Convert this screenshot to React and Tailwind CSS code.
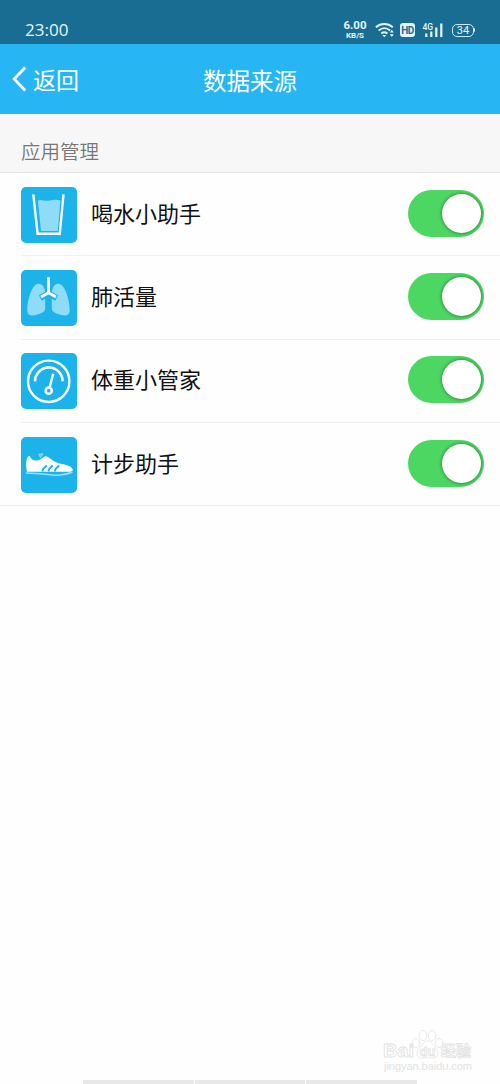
import React from "react";

const GlassIcon = () => (
  <svg viewBox="0 0 56 56" className="h-full w-full" fill="none">
    <path d="M16.8 13.6c3-1.6 6 .7 11 .2 5-.9 8-1.5 11.6-.2L36.8 44H20z" fill="#8edcf8" />
    <path d="M12.3 7.3l4.3 39.4h22.2l3.7-39.4" stroke="#fff" strokeWidth="2.4" />
  </svg>
);

const LungsIcon = () => (
  <svg viewBox="0 0 56 56" className="h-full w-full" fill="none">
    <path d="M17.5 13.8c4.5 0 6.7 4.5 6.7 10V38c0 4-3.5 5.4-7.7 6.5-5.5 1.5-10.2 2-10.2-4.5 0-11 5.2-26.2 11.2-26.2z" fill="#8edcf8" />
    <path d="M37.5 13.8c-4.5 0-6.7 4.5-6.7 10V38c0 4 3.5 5.4 7.7 6.5 5.5 1.5 10.2 2 10.2-4.5 0-11-5.2-26.2-11.2-26.2z" fill="#8edcf8" />
    <path d="M27.5 8v15.5L19.3 28M27.5 23.5l8.2 4.5" stroke="#1bb3ea" strokeWidth="6" />
    <path d="M27.5 7.3v15.5L20 27M27.5 22.8L35 27" stroke="#fff" strokeWidth="3" strokeLinejoin="round" />
  </svg>
);

const GaugeIcon = () => (
  <svg viewBox="0 0 56 56" className="h-full w-full" fill="none" stroke="#fff">
    <circle cx="27.7" cy="28.3" r="20.7" strokeWidth="2.4" />
    <path d="M14 28.3a13.8 13.8 0 0 1 27.6 0" strokeWidth="2.6" />
    <path d="M32.2 20.7L28.5 35" strokeWidth="2.4" />
    <circle cx="27.7" cy="37.7" r="3.1" strokeWidth="2.5" />
  </svg>
);

const ShoeIcon = () => (
  <svg viewBox="0 0 56 56" className="h-full w-full" fill="none">
    <path d="M8 19c1.4-.2 1.5 2 3 3.2 2.7 2.2 7 1.6 9.3-.4l3.4-2.4c1.7-.6 3.3.6 5.1 1.9 4.3 3.2 7 4.9 12 5.8 5 .9 9.6 2.4 10.9 5.2.4 1.6-1 2.5-3.3 2.5H6c-1-4.3-1.2-9.5-.2-12.8.4-1.5 1.2-2.7 2.2-3z" fill="#fff" />
    <path d="M5 36c8 .8 15 .4 22 1.6 7 1.2 17.5.7 24.5-2.6" stroke="#9de1f9" strokeWidth="1.5" />
    <path d="M21.3 34.3l1-2.6 3.5-3.2M27.3 34.3l1-2.6 3.5-3.2M33.7 34.3l1-2.6 3.5-3.2" stroke="#1bb3ea" strokeWidth="1.9" />
    <path d="M17.8 17.3l4.2-.5-2.5 3.7z" fill="#5fcdf3" stroke="#9de1f9" strokeWidth="0.9" />
  </svg>
);

const apps = [
  { name: "喝水小助手", Icon: GlassIcon },
  { name: "肺活量", Icon: LungsIcon },
  { name: "体重小管家", Icon: GaugeIcon },
  { name: "计步助手", Icon: ShoeIcon },
];

const StatusBar = () => (
  <div className="flex h-11 items-end justify-between bg-[#1a6d92] px-[25px] text-[#e3f5fc]">
    <span className="pb-[5px] font-['Open_Sans',sans-serif] text-[17px] leading-[18px]">23:00</span>
    <div className="flex h-[27px] items-center pb-px">
      <div className="-ml-px flex w-6 flex-col items-center font-['Roboto',sans-serif] font-bold">
        <span className="text-[11.5px] leading-[11px]">6.00</span>
        <span className="text-[8px] leading-[9px]">KB/S</span>
      </div>
      <svg viewBox="0 0 20 16" className="ml-2 h-4 w-5" fill="none" stroke="currentColor" strokeWidth="1.8">
        <path d="M.8 5.2c5-4.3 12-4.3 17 0M3.6 8.5c3.5-2.9 8-2.900 11.500 0M6.300 11.500c2-1.600 4.100-1.600 6.100 0" />
        <path d="M7.3 13l2 2.300 2-2.300zM14.800 10.400l2-2.600 2 2.600zM14.800 12.300l2 2.600 2-2.600z" fill="currentColor" stroke="none" />
      </svg>
      <span className="ml-[5px] flex h-[14px] w-[15px] items-center justify-center rounded-[3px] bg-[#e3f5fc] font-['Roboto',sans-serif] text-[10px] font-bold tracking-tighter text-[#1a6d92]">
        HD
      </span>
      <svg viewBox="0 0 22 16" className="ml-[7px] h-4 w-[22px]" fill="currentColor">
        <text x="0.5" y="7.5" fontSize="8.5" fontFamily="Roboto, sans-serif" fontWeight="500">4G</text>
        <path d="M3.2 11.5h2.2V15H3.200zM8.200 9.500h2.200V15H8.200zM13.200 5.500h2.200V15h-2.200zM18.200 1.500h2.200V15h-2.200z" />
      </svg>
      <span className="ml-2 flex h-[13px] w-[22px] items-center justify-center rounded-[5px] border-[1.5px] border-[#c9eaf6] font-['Roboto',sans-serif] text-[11px] leading-none">
        34
      </span>
      <span className="h-1 w-px rounded-r bg-[#c9eaf6]" />
    </div>
  </div>
);

const Header = () => (
  <header className="grid h-[70px] grid-cols-3 items-center bg-[#27b6f3] text-white">
    <div className="flex items-center pl-3">
      <svg viewBox="0 0 15 26" className="h-[26px] w-[15px]" fill="none" stroke="currentColor" strokeWidth="2.8">
        <path d="M13.2 1.5L2.2 13l11 11.5" />
      </svg>
      <span className="ml-[6px] text-[23px] leading-8">返回</span>
    </div>
    <h1 className="pt-[2px] text-center text-[23.5px] leading-8">数据来源</h1>
  </header>
);

const Toggle = () => (
  <div className="mb-[3px] flex h-[47px] w-[76px] items-center justify-end rounded-full bg-[#4cd662] pr-[3px]">
    <span className="h-[39px] w-[39px] rounded-full bg-white shadow-[0_0_3px_1px_rgba(0,0,0,0.3)]" />
  </div>
);

const AppRow = ({ name, Icon }) => (
  <li className="flex h-[83.3px] items-center pr-4 pl-[21px]">
    <div className="h-[56px] w-[56px] overflow-hidden rounded-[5px] bg-[#1bb3ea]">
      <Icon />
    </div>
    <span className="mb-[6px] ml-[14px] flex-1 text-[22px] leading-8 text-[#111]">{name}</span>
    <Toggle />
  </li>
);

const Watermark = () => (
  <div className="absolute top-[1028px] left-[383px] w-[92px] text-[#e2e2e2]">
    <svg viewBox="0 0 92 46" className="h-[46px] w-[92px]" fill="#fff" stroke="currentColor" strokeWidth="0.8">
      <ellipse cx="40" cy="7.5" rx="3.8" ry="5" />
      <ellipse cx="49" cy="7.5" rx="3.8" ry="5" />
      <ellipse cx="33" cy="15" rx="3.5" ry="4.5" />
      <ellipse cx="56" cy="15" rx="3.5" ry="4.5" />
      <path d="M44.5 13c4 0 5 4 8 7 4 4 3 10-2 10-4 0-8-1-12 0-5 0-6-6-2-10 3-3 4-7 8-7z" />
      <text x="0" y="29" fontSize="19" fontWeight="700" textLength="31" lengthAdjust="spacingAndGlyphs" fontFamily="Liberation Sans, sans-serif">Bai</text>
      <text x="36.5" y="28" fontSize="13" fontWeight="700" fontFamily="Liberation Sans, sans-serif">du</text>
      <text x="58" y="28" fontSize="15" fontWeight="700" fontFamily="Noto Sans CJK SC, sans-serif">经验</text>
      <text x="1" y="42" fontSize="11" fill="currentColor" stroke="none" textLength="88" fontFamily="Liberation Sans, sans-serif">jingyan.baidu.com</text>
    </svg>
  </div>
);

const App = () => (
  <div className="relative flex h-[1084px] w-[500px] flex-col overflow-hidden bg-[#fefefe] font-['Noto_Sans_CJK_SC',sans-serif]">
    <StatusBar />
    <Header />
    <h2 className="flex h-[59px] items-end border-b border-[#e3e3e3] bg-[#f7f7f7] pb-[5px] pl-[21px] text-[19.5px] leading-8 font-[350] text-[#777]">
      应用管理
    </h2>
    <ul>
      {apps.map((app, i) => (
        <React.Fragment key={app.name}>
          {i > 0 && <li className="-mt-px ml-[21px] h-px bg-[#f0f0f0]" />}
          <AppRow {...app} />
        </React.Fragment>
      ))}
    </ul>
    <div className="-mt-px h-px bg-[#eee]" />
    <div className="mt-auto ml-[83px] flex h-1 w-[334px] gap-px">
      <span className="flex-1 bg-[#e8e8e8]" />
      <span className="flex-1 bg-[#e8e8e8]" />
      <span className="flex-1 bg-[#e8e8e8]" />
    </div>
    <Watermark />
  </div>
);

export default App;
